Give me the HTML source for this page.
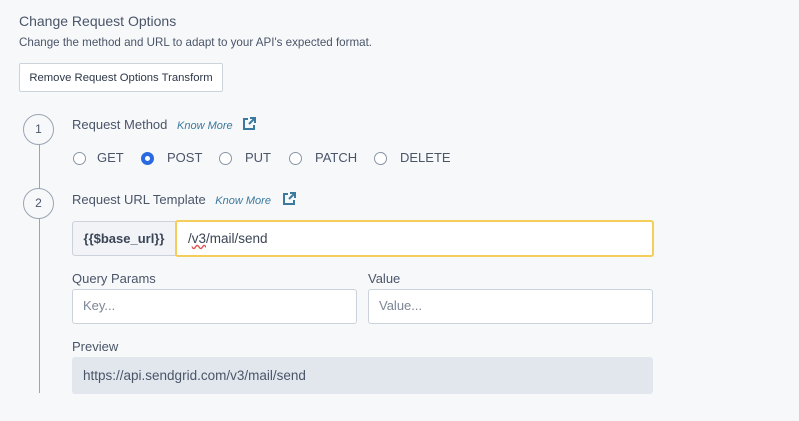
<!DOCTYPE html>
<html><head><style>
body{margin:0;width:799px;height:421px;background:#f7f8fa;font-family:"Liberation Sans",sans-serif;color:#4a5568;position:relative;overflow:hidden}
.a{position:absolute;white-space:nowrap}
.circ{position:absolute;width:31px;height:31px;border:1px solid #9aa5b4;border-radius:50%;box-sizing:border-box;text-align:center;line-height:29px;font-size:12px;color:#4a5568;background:#f7f8fa}
.rad{position:absolute;width:13px;height:13px;border:1px solid #8a96a6;border-radius:50%;box-sizing:border-box;background:#fff}
.km{font-style:italic;color:#3b7a9e;font-size:11px}
.inp{position:absolute;background:#fff;border:1px solid #cbd2dc;border-radius:3px;box-sizing:border-box;font-size:13px;color:#7b8696;padding-left:10px;line-height:31px}
</style></head><body>
<div class="a" style="left:19px;top:13px;font-size:14px;color:#4a5568">Change Request Options</div>
<div class="a" style="left:19px;top:36px;font-size:11.6px;color:#4a5568">Change the method and URL to adapt to your API's expected format.</div>
<div class="a" style="left:19px;top:63px;width:204px;height:29px;border:1px solid #cdd3db;border-radius:2px;background:#fff;box-sizing:border-box;font-size:11.3px;line-height:28px;text-align:center;color:#2d3748">Remove Request Options Transform</div>
<div class="a" style="left:39px;top:140px;width:1px;height:253px;background:#9aa5b4"></div>
<div class="circ" style="left:23px;top:114px">1</div>
<div class="circ" style="left:23px;top:188px">2</div>
<div class="a" style="left:72px;top:117px;font-size:13px">Request Method <span class="km" style="margin-left:6px">Know More</span></div>
<svg class="a" style="left:242px;top:117px" width="14" height="14" viewBox="0 0 14 14" fill="none" stroke="#3b7a9e" stroke-width="2"><path d="M6 2H2v10h10V8"/><path d="M7 7l6-6M8 1h5v5"/></svg>
<div class="rad" style="left:73px;top:152px"></div><div class="a" style="left:97px;top:150px;font-size:13px">GET</div>
<div class="rad" style="left:141px;top:152px;border:4px solid #2a6ae0"></div><div class="a" style="left:167px;top:150px;font-size:13px">POST</div>
<div class="rad" style="left:219px;top:152px"></div><div class="a" style="left:245px;top:150px;font-size:13px">PUT</div>
<div class="rad" style="left:289px;top:152px"></div><div class="a" style="left:315px;top:150px;font-size:13px">PATCH</div>
<div class="rad" style="left:374px;top:152px"></div><div class="a" style="left:400px;top:150px;font-size:13px">DELETE</div>
<div class="a" style="left:72px;top:192px;font-size:13px">Request URL Template <span class="km" style="margin-left:6px">Know More</span></div>
<svg class="a" style="left:282px;top:192px" width="14" height="14" viewBox="0 0 14 14" fill="none" stroke="#3b7a9e" stroke-width="2"><path d="M6 2H2v10h10V8"/><path d="M7 7l6-6M8 1h5v5"/></svg>
<div class="a" style="left:72px;top:221px;width:104px;height:35px;background:#f1f3f6;border:1px solid #cbd2dc;border-radius:3px 0 0 3px;box-sizing:border-box;font-size:13px;font-weight:bold;line-height:33px;text-align:center;color:#3a4556">{{$base_url}}</div>
<div class="a" style="left:175px;top:220px;width:479px;height:37px;background:#fff;border:2px solid #f5cd5b;border-radius:3px;box-sizing:border-box;font-size:13.5px;line-height:33px;padding-left:11px;color:#3a4556">/<span style="text-decoration:underline wavy #e05050">v3</span>/mail/send</div>
<div class="a" style="left:72px;top:271px;font-size:13px">Query Params</div>
<div class="a" style="left:368px;top:271px;font-size:13px">Value</div>
<div class="inp" style="left:72px;top:289px;width:285px;height:35px">Key...</div>
<div class="inp" style="left:368px;top:289px;width:285px;height:35px">Value...</div>
<div class="a" style="left:72px;top:339px;font-size:13px">Preview</div>
<div class="a" style="left:72px;top:357px;width:581px;height:37px;background:#e2e7ee;border-radius:3px;font-size:13.5px;line-height:37px;padding-left:11px;box-sizing:border-box;color:#4a5568">https://api.sendgrid.com/v3/mail/send</div>
</body></html>
